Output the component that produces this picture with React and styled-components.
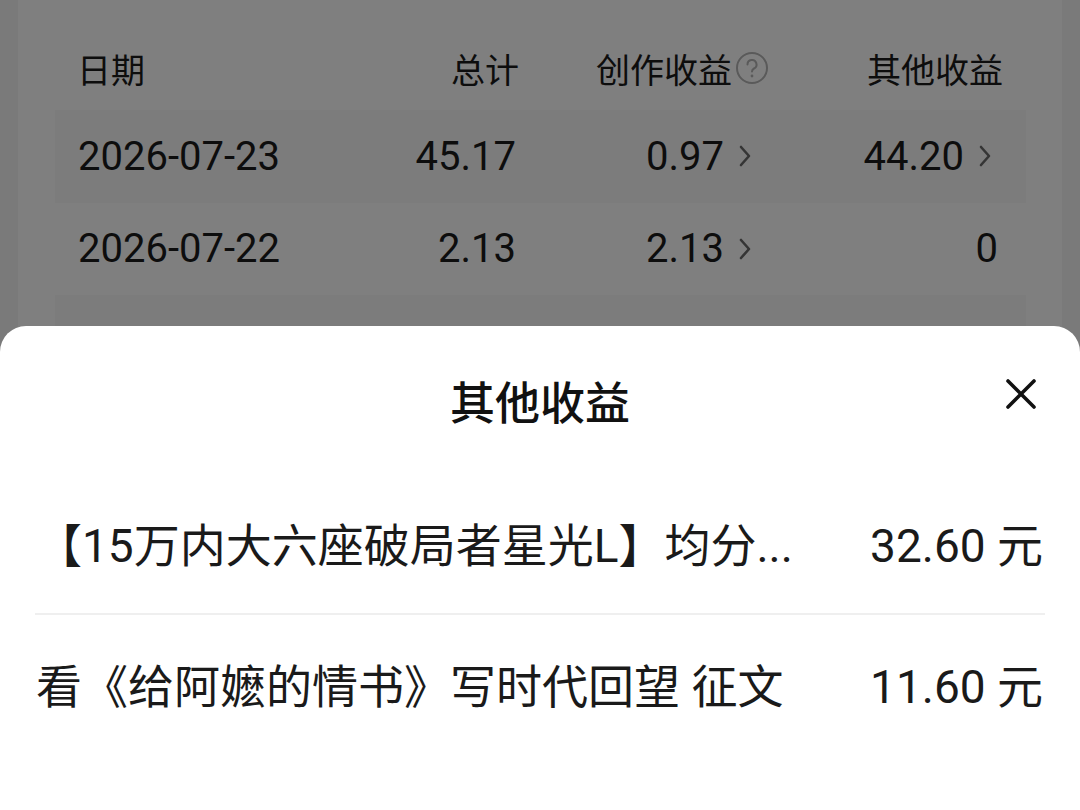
import React from "react";
import styled, { createGlobalStyle } from "styled-components";

const GlobalStyle = createGlobalStyle`
  html, body {
    margin: 0;
    padding: 0;
    background: #f4f4f4;
    font-family: "Roboto", "Noto Sans CJK SC", sans-serif;
    color: #1a1a1a;
  }
  * { box-sizing: border-box; }
`;

const Page = styled.div`
  width: 1080px;
  height: 810px;
  overflow: hidden;
  position: relative;
  background: #f4f4f4;
  padding: 0 18px;
`;

const Card = styled.div`
  background: #ffffff;
  padding: 26px 36px 0 37px;
  height: 100%;
`;

const TableRow = styled.div`
  display: grid;
  grid-template-columns: ${(p) => (p.$head ? "254px" : "250px")} 188px 250px 1fr;
  align-items: center;
  height: ${(p) => (p.$head ? "84px" : "92.5px")};
  padding: ${(p) => (p.$head ? "0 23px 0 22px" : "0 28px 0 23px")};
  background: ${(p) => (p.$shade ? "#f8f8f8" : "transparent")};
  font-size: ${(p) => (p.$head ? "34px" : "40px")};
`;

const Cell = styled.div`
  display: flex;
  align-items: center;
  justify-content: ${(p) => (p.$left ? "flex-start" : "flex-end")};
  padding-right: ${(p) => p.$inset || 0}px;
  white-space: nowrap;
`;

const HelpIcon = styled.svg`
  width: 34px;
  height: 34px;
  margin-left: 3px;
`;

const Chevron = styled.svg`
  width: 14px;
  height: 24px;
  margin-left: 14px;
`;

const Scrim = styled.div`
  position: absolute;
  inset: 0;
  background: rgba(0, 0, 0, 0.5);
`;

const Sheet = styled.div`
  position: absolute;
  left: 0;
  right: 0;
  bottom: 0;
  height: 484px;
  background: #ffffff;
  border-radius: 26px 26px 0 0;
  padding: 0 35px;
  display: flex;
  flex-direction: column;
`;

const SheetHead = styled.div`
  height: 149px;
  display: flex;
  align-items: center;
  justify-content: center;
  position: relative;
`;

const SheetTitle = styled.div`
  font-family: "Noto Sans CJK SC", sans-serif;
  font-size: 45px;
  font-weight: 500;
  color: #111;
`;

const CloseButton = styled.button`
  position: absolute;
  right: 6px;
  top: 50px;
  width: 36px;
  height: 36px;
  border: none;
  background: none;
  padding: 0;
  display: flex;
  align-items: center;
  justify-content: center;
`;

const ItemRow = styled.div`
  height: 140px;
  display: flex;
  align-items: center;
  justify-content: space-between;
  border-bottom: ${(p) => (p.$line ? "2px solid #efefef" : "none")};
  padding: 0 2px 0 1px;
  font-size: 46px;
`;

const ItemName = styled.div`
  max-width: 790px;
  white-space: nowrap;
  overflow: hidden;
  text-overflow: ellipsis;
  color: #1a1a1a;
  margin-top: -4px;
`;

const ItemAmount = styled.div`
  white-space: nowrap;
  color: #1a1a1a;
  margin-top: -4px;
`;

const rows = [
  { date: "2026-07-23", total: "45.17", create: "0.97", other: "44.20" },
  { date: "2026-07-22", total: "2.13", create: "2.13", other: "0" },
  { date: "2026-07-21", total: "1.48", create: "1.48", other: "0" },
];

const items = [
  { name: "【15万内大六座破局者星光L】均分...", amount: "32.60 元" },
  { name: "看《给阿嬷的情书》写时代回望 征文", amount: "11.60 元" },
];

const Arrow = () => (
  <Chevron viewBox="0 0 14 24">
    <path d="M3 3 L11 12 L3 21" fill="none" stroke="#6a6a6a" strokeWidth="2.6" strokeLinecap="round" strokeLinejoin="round" />
  </Chevron>
);

const App = () => {
  return (
    <Page>
      <GlobalStyle />
      <Card>
        <TableRow $head>
          <Cell $left>日期</Cell>
          <Cell>总计</Cell>
          <Cell>
            创作收益
            <HelpIcon viewBox="0 0 34 34">
              <circle cx="17" cy="17" r="15" fill="none" stroke="#b4b4b4" strokeWidth="2" />
              <path d="M12.5 13.5a4.5 4.5 0 1 1 6.5 4c-1.3.7-2 1.5-2 3" fill="none" stroke="#b4b4b4" strokeWidth="2" strokeLinecap="round" />
              <circle cx="17" cy="25" r="1.4" fill="#b4b4b4" />
            </HelpIcon>
          </Cell>
          <Cell>其他收益</Cell>
        </TableRow>
        {rows.map((r, i) => (
          <TableRow key={r.date} $shade={i % 2 === 0}>
            <Cell $left>{r.date}</Cell>
            <Cell>{r.total}</Cell>
            <Cell $inset={14}>
              {r.create}
              <Arrow />
            </Cell>
            <Cell $inset={r.other === "0" ? 0 : 6}>
              {r.other}
              {r.other !== "0" && <Arrow />}
            </Cell>
          </TableRow>
        ))}
      </Card>
      <Scrim />
      <Sheet>
        <SheetHead>
          <SheetTitle>其他收益</SheetTitle>
          <CloseButton aria-label="关闭">
            <svg width="32" height="32" viewBox="0 0 32 32">
              <path d="M3 3 L29 29 M29 3 L3 29" stroke="#111" strokeWidth="3.6" strokeLinecap="round" />
            </svg>
          </CloseButton>
        </SheetHead>
        {items.map((it, i) => (
          <ItemRow key={it.name} $line={i === 0}>
            <ItemName>{it.name}</ItemName>
            <ItemAmount>{it.amount}</ItemAmount>
          </ItemRow>
        ))}
      </Sheet>
    </Page>
  );
};

export default App;
